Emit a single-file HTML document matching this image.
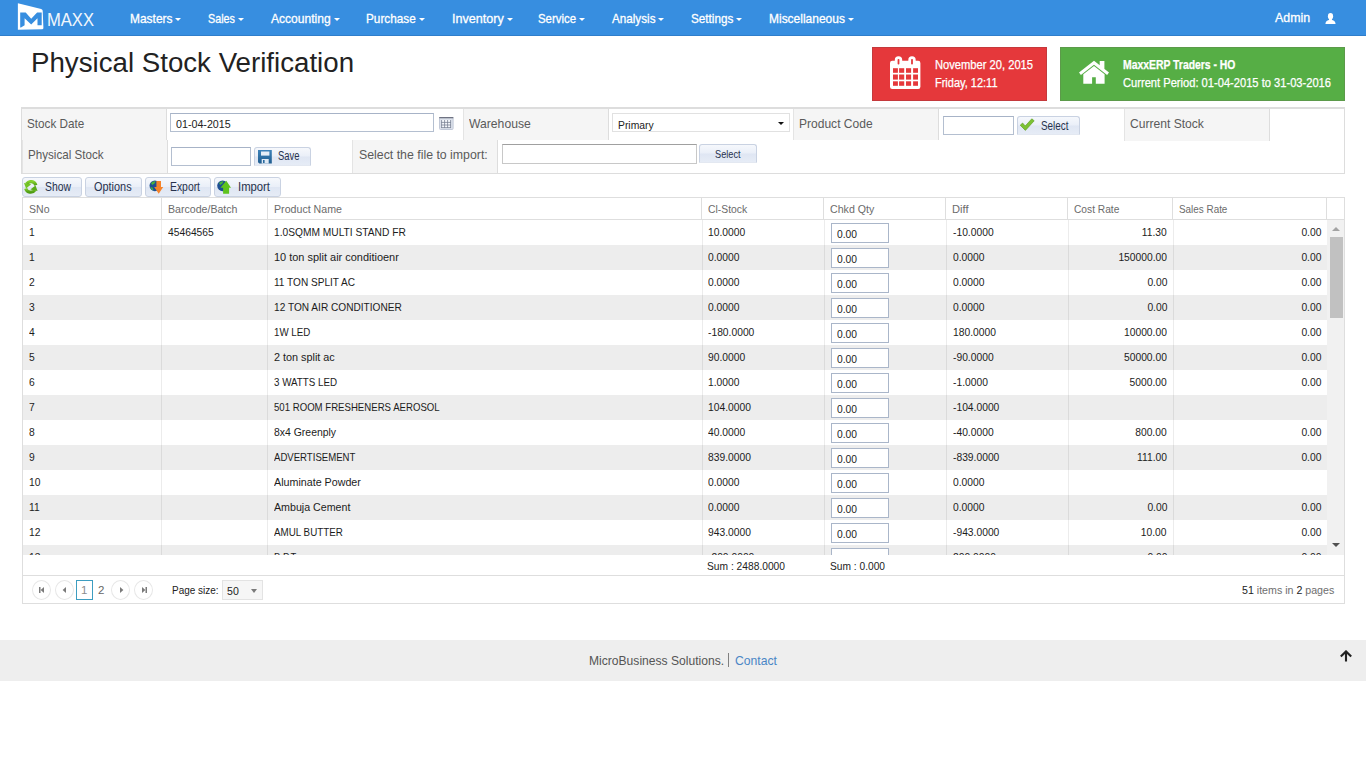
<!DOCTYPE html>
<html>
<head>
<meta charset="utf-8">
<title>Physical Stock Verification</title>
<style>
*{box-sizing:border-box;margin:0;padding:0}
html,body{width:1366px;height:768px;overflow:hidden;background:#fff}
body{font-family:"Liberation Sans",sans-serif;position:relative;color:#333}
.abs{position:absolute;white-space:nowrap}
.sx{display:inline-block;transform-origin:0 50%;white-space:pre}
.sx.r{transform-origin:100% 50%}
/* NAVBAR */
#nav{position:absolute;left:0;top:0;width:1366px;height:36px;background:#378ee0;border-bottom:1px solid #2f7ecb}
.ni{position:absolute;top:11px;font-size:13px;line-height:16px;color:#fff;white-space:nowrap;-webkit-text-stroke:.3px #fff}
.car{position:absolute;top:17.5px;width:0;height:0;border-left:3px solid transparent;border-right:3px solid transparent;border-top:3px solid #fff}
/* TITLE */
#title{position:absolute;left:31px;top:45px;font-size:27px;line-height:36px;color:#222;white-space:nowrap}
/* INFO BOXES */
#red{position:absolute;left:872px;top:47px;width:175px;height:54px;background:#e5383b;box-shadow:inset 0 0 0 1px #c4393c}
#green{position:absolute;left:1060px;top:47px;width:285px;height:54px;background:#56ae45;box-shadow:inset 0 0 0 1px #5c9a4a}
.bt{position:absolute;font-size:12px;line-height:14px;color:#fff;white-space:nowrap;-webkit-text-stroke:.25px #fff}
/* FORM */
#form{position:absolute;left:21px;top:107px;width:1324px;height:67px;border:1px solid #ddd;border-top:2px solid #ddd;background:#fff}
.lc{position:absolute;background:#f5f5f5;border-right:1px solid #ddd;border-left:1px solid #e4e4e4}
.lb{position:absolute;font-size:13px;line-height:16px;color:#5a5a5a;white-space:nowrap}
.inp{position:absolute;background:#fff;border:1px solid #b4bfd0;border-top-color:#a7b3c7}
.itx{position:absolute;font-size:11px;line-height:14px;color:#222;white-space:nowrap}
.btn{position:absolute;border:1px solid #c9d2e2;border-bottom-color:#e3e8f1;border-radius:3px 3px 1px 1px;background:linear-gradient(#f6f8fc 0%,#eaeff8 48%,#dfe6f3 52%,#e6ecf6 100%)}
.btn.tb{border-bottom-color:#c9d2e2;border-radius:3px}
.btx{position:absolute;font-size:12px;line-height:14px;color:#27324d;white-space:nowrap}
/*CSS-FORM*/
/* TOOLBAR + GRID */
.hl{position:absolute;background:#dedede;height:1px}
.vl{position:absolute;background:#dedede;width:1px}
.hd{position:absolute;top:199px;font-size:11px;line-height:21px;color:#6b6b6b;white-space:nowrap}
#gbody{position:absolute;left:23px;top:220px;width:1304px;height:335px;overflow:hidden;background:#fff}
.row{position:absolute;left:0;width:1304px;height:25px}
.row.alt{background:#ededed}
.c{position:absolute;top:0;font-size:11px;line-height:25px;color:#1c1c1c;white-space:nowrap}
.cr{text-align:right}
.qi{position:absolute;left:808px;top:3px;width:58px;height:20px;background:#fff;border:1px solid #aab6c9}
.qt{position:absolute;left:814px;top:4px;font-size:11px;line-height:20px;color:#1c1c1c}
.bv{position:absolute;top:0;width:1px;height:336px;background:rgba(0,0,0,.075)}
/*CSS-GRID*/
/* PAGER / FOOTER */
.pc{position:absolute;top:580px;width:19px;height:20px;border:1px solid #e7e7e7;border-radius:50%;background:#fff}
.pt{position:absolute;font-size:11px;line-height:14px;white-space:nowrap}
#foot{position:absolute;left:0;top:640px;width:1366px;height:41px;background:#eee}
.ft{position:absolute;top:653px;font-size:13px;line-height:16px;color:#555;white-space:nowrap}
/*CSS-FOOT*/
</style>
</head>
<body>
<!--NAV-->
<div id="nav">
<svg class="abs" style="left:16px;top:0px" width="32" height="34" viewBox="16 0 32 34"><path d="M17.9 3.2 L41.2 8.9 Q42.6 9.3 42.7 10.8 L43.4 27.9 Q43.4 29.3 42 29.35 L17.9 29.7 Z" fill="#fff"/><path d="M20.2 12.4 H25.7 L31.2 18.7 L37.1 12.4 H41.7 V25.3 H37.5 V18.3 L31.2 24.6 L24.6 18.3 V25.3 L21 27.6 H20.2 Z" fill="#378ee0"/></svg>
<div class="abs" id="maxx" style="left:47px;top:10px;font-size:18px;line-height:20px;color:#fff;opacity:.93"><span class="sx" style="transform:scaleX(0.921)">MAXX</span></div>
<div class="ni" style="left:130px"><span class="sx" style="transform:scaleX(0.919)">Masters</span></div><i class="car" style="left:175px"></i>
<div class="ni" style="left:208px"><span class="sx" style="transform:scaleX(0.830)">Sales</span></div><i class="car" style="left:238px"></i>
<div class="ni" style="left:271px"><span class="sx" style="transform:scaleX(0.928)">Accounting</span></div><i class="car" style="left:334px"></i>
<div class="ni" style="left:366px"><span class="sx" style="transform:scaleX(0.905)">Purchase</span></div><i class="car" style="left:419px"></i>
<div class="ni" style="left:452px"><span class="sx" style="transform:scaleX(0.969)">Inventory</span></div><i class="car" style="left:507px"></i>
<div class="ni" style="left:538px"><span class="sx" style="transform:scaleX(0.879)">Service</span></div><i class="car" style="left:579px"></i>
<div class="ni" style="left:612px"><span class="sx" style="transform:scaleX(0.898)">Analysis</span></div><i class="car" style="left:658px"></i>
<div class="ni" style="left:691px"><span class="sx" style="transform:scaleX(0.900)">Settings</span></div><i class="car" style="left:736px"></i>
<div class="ni" style="left:769px"><span class="sx" style="transform:scaleX(0.921)">Miscellaneous</span></div><i class="car" style="left:848px"></i>
<div class="ni" style="left:1275px;top:10px"><span class="sx" style="transform:scaleX(0.952)">Admin</span></div>
<svg class="abs" style="left:1324.5px;top:12.8px" width="11" height="11.6" viewBox="0 0 12 13"><ellipse cx="6" cy="3.6" rx="2.9" ry="3.6" fill="#fff"/><path d="M0.3 12.5 C0.3 9.5 2 8.6 4.2 7.8 L4.6 6.5 H7.4 L7.8 7.8 C10 8.6 11.7 9.5 11.7 12.5 Z" fill="#fff"/></svg>
</div>
<div id="title"><span class="sx" style="transform:scaleX(1.025)">Physical Stock Verification</span></div>
<!--BOXES-->
<div id="red">
<svg class="abs" style="left:18px;top:9px" width="31" height="34" viewBox="0 0 31 34"><rect x="0" y="4.8" width="30.4" height="28.2" rx="2.2" fill="#fff"/><rect x="4.8" y="0.2" width="7.4" height="10" rx="3.7" fill="#fff"/><rect x="18.3" y="0.2" width="7.4" height="10" rx="3.7" fill="#fff"/><g fill="#e5383b"><rect x="7.6" y="3" width="1.8" height="5.6" rx=".8"/><rect x="21.1" y="3" width="1.8" height="5.6" rx=".8"/><rect x="3" y="12.2" width="4.9" height="4.6"/><rect x="9.1" y="12.2" width="5.1" height="4.6"/><rect x="16" y="12.2" width="5.1" height="4.6"/><rect x="23.1" y="12.2" width="4.9" height="4.6"/><rect x="3" y="18.5" width="4.9" height="5.1"/><rect x="9.1" y="18.5" width="5.1" height="5.1"/><rect x="16" y="18.5" width="5.1" height="5.1"/><rect x="23.1" y="18.5" width="4.9" height="5.1"/><rect x="3" y="25.3" width="4.9" height="4.5"/><rect x="9.1" y="25.3" width="5.1" height="4.5"/><rect x="16" y="25.3" width="5.1" height="4.5"/><rect x="23.1" y="25.3" width="4.9" height="4.5"/></g></svg>
<div class="bt" style="left:63px;top:11px"><span class="sx" style="transform:scaleX(0.930)">November 20, 2015</span></div>
<div class="bt" style="left:63px;top:29px"><span class="sx" style="transform:scaleX(0.916)">Friday, 12:11</span></div>
</div>
<div id="green">
<svg class="abs" style="left:18px;top:13px" width="32" height="25" viewBox="0 0 32 25"><path d="M1 12.5 L16 .8 L31 12.5 L29.1 14.9 L16 4.7 L2.9 14.9 Z M21.7 1.1 H26.4 V10 L21.7 6.2 Z M5.3 14.3 L16 5.9 L26.6 14.3 V23.8 H17.8 V17.3 H14.1 V23.8 H5.3 Z" fill="#fff"/></svg>
<div class="bt" style="left:63px;top:11px;font-weight:bold"><span class="sx" style="transform:scaleX(0.866)">MaxxERP Traders - HO</span></div>
<div class="bt" style="left:63px;top:29px"><span class="sx" style="transform:scaleX(0.928)">Current Period: 01-04-2015 to 31-03-2016</span></div>
</div>
<!--FORM-->
<div id="form"></div>
<div class="lc" style="left:22px;top:109px;width:145px;height:31px;border-left:0"></div>
<div class="lc" style="left:22px;top:140px;width:146px;height:33px"></div>
<div class="lc" style="left:463px;top:109px;width:146px;height:31px"></div>
<div class="lc" style="left:352px;top:140px;width:146px;height:33px"></div>
<div class="lc" style="left:793px;top:109px;width:146px;height:31px"></div>
<div class="lc" style="left:1124px;top:109px;width:146px;height:32px"></div>
<div class="lb" style="left:27px;top:116px"><span class="sx" style="transform:scaleX(0.901)">Stock Date</span></div>
<div class="lb" style="left:28px;top:147px"><span class="sx" style="transform:scaleX(0.894)">Physical Stock</span></div>
<div class="lb" style="left:469px;top:116px"><span class="sx" style="transform:scaleX(0.936)">Warehouse</span></div>
<div class="lb" style="left:359px;top:147px"><span class="sx" style="transform:scaleX(0.948)">Select the file to import:</span></div>
<div class="lb" style="left:799px;top:116px"><span class="sx" style="transform:scaleX(0.926)">Product Code</span></div>
<div class="lb" style="left:1130px;top:116px"><span class="sx" style="transform:scaleX(0.930)">Current Stock</span></div>
<div class="inp" style="left:170px;top:113px;width:264px;height:19px"></div>
<div class="itx" style="left:176px;top:117px"><span class="sx" style="transform:scaleX(0.972)">01-04-2015</span></div>
<svg class="abs" style="left:439px;top:117px" width="15" height="13" viewBox="0 0 15 13"><rect x=".5" y=".5" width="13.6" height="12" rx="1" fill="#dde2ec" stroke="#c2c9d8"/><rect x=".2" y="0" width="14.2" height="1.3" fill="#6f7383"/><rect x="2.4" y="3" width="9.4" height="7.8" fill="#f6f8fc"/><g stroke="#7a8194" stroke-width=".8"><path d="M2.6 3 V11 M5.6 3 V11 M8.6 3 V11 M11.6 3 V11 M2.2 5.4 H12 M2.2 8 H12 M2.2 10.6 H12"/></g></svg>
<div class="inp" style="left:612px;top:113px;width:178px;height:19px;border-color:#e1e1e1"></div>
<div class="itx" style="left:618px;top:118px"><span class="sx" style="transform:scaleX(0.940)">Primary</span></div>
<i class="abs" style="left:778px;top:121.5px;width:0;height:0;border-left:3px solid transparent;border-right:3px solid transparent;border-top:3.4px solid #111"></i>
<div class="inp" style="left:943px;top:116px;width:71px;height:19px"></div>
<div class="btn" style="left:1017px;top:116px;width:63px;height:19px"></div>
<svg class="abs" style="left:1019px;top:118px" width="16" height="13" viewBox="0 0 16 13"><path d="M1.2 7.2 L3.6 5 L6.2 8 L12.8 0.8 L15.2 2.8 L6.4 12.4 Z" fill="#7cc233" stroke="#5a9a1e" stroke-width=".6"/></svg>
<div class="btx" style="left:1041px;top:119px"><span class="sx" style="transform:scaleX(0.821)">Select</span></div>
<div class="inp" style="left:171px;top:147px;width:80px;height:19px"></div>
<div class="btn" style="left:254px;top:147px;width:57px;height:19px"></div>
<svg class="abs" style="left:258px;top:150px" width="14" height="14" viewBox="0 0 14 14"><defs><linearGradient id="fg" x1="0" y1="0" x2="0" y2="1"><stop offset="0" stop-color="#3d83ba"/><stop offset="1" stop-color="#1f5c8e"/></linearGradient></defs><path d="M0 0 H13.8 V13.6 H1.4 L0 12.2 Z" fill="url(#fg)"/><rect x="3" y="1.5" width="8.4" height="4.1" fill="#e6eef7"/><rect x="3.7" y="9" width="7" height="4.6" fill="#dfe9f4"/><rect x="5" y="10" width="1.6" height="3" fill="#2a6a9f"/></svg>
<div class="btx" style="left:278px;top:149px"><span class="sx" style="transform:scaleX(0.786)">Save</span></div>
<div class="inp" style="left:502px;top:144px;width:195px;height:20px;border-color:#c8c8c8;border-top-color:#a0a0a0"></div>
<div class="btn" style="left:699px;top:144px;width:58px;height:19px"></div>
<div class="btx" style="left:715px;top:147px;font-size:11px"><span class="sx" style="transform:scaleX(0.837)">Select</span></div>
<!--TOOLBAR-->
<div class="btn tb" style="left:22px;top:177px;width:60px;height:20px"></div>
<div class="btn tb" style="left:85px;top:177px;width:57px;height:20px"></div>
<div class="btn tb" style="left:145px;top:177px;width:66px;height:20px"></div>
<div class="btn tb" style="left:214px;top:177px;width:67px;height:20px"></div>
<div class="btx" style="left:45px;top:180px"><span class="sx" style="transform:scaleX(0.866)">Show</span></div>
<div class="btx" style="left:94px;top:180px"><span class="sx" style="transform:scaleX(0.909)">Options</span></div>
<div class="btx" style="left:170px;top:180px"><span class="sx" style="transform:scaleX(0.865)">Export</span></div>
<div class="btx" style="left:238px;top:180px"><span class="sx" style="transform:scaleX(0.941)">Import</span></div>
<!--TBICONS-->
<svg class="abs" style="left:24px;top:180px" width="14" height="14" viewBox="0 0 14 14"><defs><linearGradient id="gg" x1="0" y1="0" x2="0" y2="1"><stop offset="0" stop-color="#84d030"/><stop offset="1" stop-color="#4f9c14"/></linearGradient></defs><g fill="none" stroke="url(#gg)" stroke-width="3.2"><path d="M11.9 5.3 A5.2 5.2 0 0 0 2.6 3.9"/><path d="M1.7 8.5 A5.2 5.2 0 0 0 11 9.9"/></g><path d="M0 2.9 L7.2 4.2 L2.1 8.4 Z" fill="#74c427"/><path d="M13.6 10.9 L6.4 9.6 L11.5 5.4 Z" fill="#5aaa19"/></svg>
<svg class="abs" style="left:149px;top:180px" width="15" height="14" viewBox="0 0 15 14"><circle cx="5.9" cy="5.8" r="5.4" fill="#1e4f93"/><path d="M2 3 Q4 .8 6.5 1.2 L5.5 3.5 L3.2 5 Z M1.2 7 L3.5 7.5 L4.5 10.5 L2.8 9.8 Z" fill="#46b23c"/><path d="M7.4 1 H12 V7 H14.2 L9.7 13.8 L5.2 7 H7.4 Z" fill="#f5832b"/></svg>
<svg class="abs" style="left:217px;top:180px" width="15" height="14" viewBox="0 0 15 14"><circle cx="5.6" cy="5.8" r="5.4" fill="#1e4f93"/><path d="M2 3 Q4 .8 6.5 1.2 L5.5 3.5 L3.2 5 Z" fill="#46b23c"/><path d="M9.3 .7 L14 7.7 H12.1 V13.7 H6.1 V7.7 H3.4 Z" fill="#5ec31d"/></svg>
<!--GRID-->
<div class="hl" style="left:22px;top:197px;width:1323px"></div>
<div class="hl" style="left:22px;top:219px;width:1323px"></div>
<div class="vl" style="left:22px;top:197px;height:407px"></div>
<div class="vl" style="left:1344px;top:197px;height:407px"></div>
<div class="vl" style="left:161px;top:198px;height:21px"></div>
<div class="vl" style="left:267px;top:198px;height:21px"></div>
<div class="vl" style="left:701px;top:198px;height:21px"></div>
<div class="vl" style="left:823px;top:198px;height:21px"></div>
<div class="vl" style="left:945px;top:198px;height:21px"></div>
<div class="vl" style="left:1067px;top:198px;height:21px"></div>
<div class="vl" style="left:1172px;top:198px;height:21px"></div>
<div class="vl" style="left:1326px;top:198px;height:21px"></div>
<div class="hd" style="left:29px"><span class="sx" style="transform:scaleX(0.958)">SNo</span></div>
<div class="hd" style="left:168px"><span class="sx" style="transform:scaleX(0.963)">Barcode/Batch</span></div>
<div class="hd" style="left:274px"><span class="sx" style="transform:scaleX(0.967)">Product Name</span></div>
<div class="hd" style="left:708px"><span class="sx" style="transform:scaleX(0.943)">Cl-Stock</span></div>
<div class="hd" style="left:830px"><span class="sx" style="transform:scaleX(0.966)">Chkd Qty</span></div>
<div class="hd" style="left:952px"><span class="sx" style="transform:scaleX(1.011)">Diff</span></div>
<div class="hd" style="left:1074px"><span class="sx" style="transform:scaleX(0.928)">Cost Rate</span></div>
<div class="hd" style="left:1179px"><span class="sx" style="transform:scaleX(0.899)">Sales Rate</span></div>
<div id="gbody">
<div class="row" style="top:0px"><div class="c" style="left:6px"><span class="sx" style="transform:scaleX(.935)">1</span></div><div class="c" style="left:145px"><span class="sx" style="transform:scaleX(.935)">45464565</span></div><div class="c" style="left:251px"><span class="sx" style="transform:scaleX(0.928)">1.0SQMM MULTI STAND FR</span></div><div class="c" style="left:685px"><span class="sx" style="transform:scaleX(.935)">10.0000</span></div><div class="qi"></div><div class="qt"><span class="sx" style="transform:scaleX(.935)">0.00</span></div><div class="c" style="left:930px"><span class="sx" style="transform:scaleX(.935)">-10.0000</span></div><div class="c cr" style="right:160px"><span class="sx r" style="transform:scaleX(.935)">11.30</span></div><div class="c cr" style="right:6px"><span class="sx r" style="transform:scaleX(.935)">0.00</span></div></div>
<div class="row alt" style="top:25px"><div class="c" style="left:6px"><span class="sx" style="transform:scaleX(.935)">1</span></div><div class="c" style="left:251px"><span class="sx" style="transform:scaleX(0.996)">10 ton split air conditioenr</span></div><div class="c" style="left:685px"><span class="sx" style="transform:scaleX(.935)">0.0000</span></div><div class="qi"></div><div class="qt"><span class="sx" style="transform:scaleX(.935)">0.00</span></div><div class="c" style="left:930px"><span class="sx" style="transform:scaleX(.935)">0.0000</span></div><div class="c cr" style="right:160px"><span class="sx r" style="transform:scaleX(.935)">150000.00</span></div><div class="c cr" style="right:6px"><span class="sx r" style="transform:scaleX(.935)">0.00</span></div></div>
<div class="row" style="top:50px"><div class="c" style="left:6px"><span class="sx" style="transform:scaleX(.935)">2</span></div><div class="c" style="left:251px"><span class="sx" style="transform:scaleX(0.916)">11 TON SPLIT AC</span></div><div class="c" style="left:685px"><span class="sx" style="transform:scaleX(.935)">0.0000</span></div><div class="qi"></div><div class="qt"><span class="sx" style="transform:scaleX(.935)">0.00</span></div><div class="c" style="left:930px"><span class="sx" style="transform:scaleX(.935)">0.0000</span></div><div class="c cr" style="right:160px"><span class="sx r" style="transform:scaleX(.935)">0.00</span></div><div class="c cr" style="right:6px"><span class="sx r" style="transform:scaleX(.935)">0.00</span></div></div>
<div class="row alt" style="top:75px"><div class="c" style="left:6px"><span class="sx" style="transform:scaleX(.935)">3</span></div><div class="c" style="left:251px"><span class="sx" style="transform:scaleX(0.920)">12 TON AIR CONDITIONER</span></div><div class="c" style="left:685px"><span class="sx" style="transform:scaleX(.935)">0.0000</span></div><div class="qi"></div><div class="qt"><span class="sx" style="transform:scaleX(.935)">0.00</span></div><div class="c" style="left:930px"><span class="sx" style="transform:scaleX(.935)">0.0000</span></div><div class="c cr" style="right:160px"><span class="sx r" style="transform:scaleX(.935)">0.00</span></div><div class="c cr" style="right:6px"><span class="sx r" style="transform:scaleX(.935)">0.00</span></div></div>
<div class="row" style="top:100px"><div class="c" style="left:6px"><span class="sx" style="transform:scaleX(.935)">4</span></div><div class="c" style="left:251px"><span class="sx" style="transform:scaleX(0.886)">1W LED</span></div><div class="c" style="left:685px"><span class="sx" style="transform:scaleX(.935)">-180.0000</span></div><div class="qi"></div><div class="qt"><span class="sx" style="transform:scaleX(.935)">0.00</span></div><div class="c" style="left:930px"><span class="sx" style="transform:scaleX(.935)">180.0000</span></div><div class="c cr" style="right:160px"><span class="sx r" style="transform:scaleX(.935)">10000.00</span></div><div class="c cr" style="right:6px"><span class="sx r" style="transform:scaleX(.935)">0.00</span></div></div>
<div class="row alt" style="top:125px"><div class="c" style="left:6px"><span class="sx" style="transform:scaleX(.935)">5</span></div><div class="c" style="left:251px"><span class="sx" style="transform:scaleX(0.984)">2 ton split ac</span></div><div class="c" style="left:685px"><span class="sx" style="transform:scaleX(.935)">90.0000</span></div><div class="qi"></div><div class="qt"><span class="sx" style="transform:scaleX(.935)">0.00</span></div><div class="c" style="left:930px"><span class="sx" style="transform:scaleX(.935)">-90.0000</span></div><div class="c cr" style="right:160px"><span class="sx r" style="transform:scaleX(.935)">50000.00</span></div><div class="c cr" style="right:6px"><span class="sx r" style="transform:scaleX(.935)">0.00</span></div></div>
<div class="row" style="top:150px"><div class="c" style="left:6px"><span class="sx" style="transform:scaleX(.935)">6</span></div><div class="c" style="left:251px"><span class="sx" style="transform:scaleX(0.891)">3 WATTS LED</span></div><div class="c" style="left:685px"><span class="sx" style="transform:scaleX(.935)">1.0000</span></div><div class="qi"></div><div class="qt"><span class="sx" style="transform:scaleX(.935)">0.00</span></div><div class="c" style="left:930px"><span class="sx" style="transform:scaleX(.935)">-1.0000</span></div><div class="c cr" style="right:160px"><span class="sx r" style="transform:scaleX(.935)">5000.00</span></div><div class="c cr" style="right:6px"><span class="sx r" style="transform:scaleX(.935)">0.00</span></div></div>
<div class="row alt" style="top:175px"><div class="c" style="left:6px"><span class="sx" style="transform:scaleX(.935)">7</span></div><div class="c" style="left:251px"><span class="sx" style="transform:scaleX(0.874)">501 ROOM FRESHENERS AEROSOL</span></div><div class="c" style="left:685px"><span class="sx" style="transform:scaleX(.935)">104.0000</span></div><div class="qi"></div><div class="qt"><span class="sx" style="transform:scaleX(.935)">0.00</span></div><div class="c" style="left:930px"><span class="sx" style="transform:scaleX(.935)">-104.0000</span></div></div>
<div class="row" style="top:200px"><div class="c" style="left:6px"><span class="sx" style="transform:scaleX(.935)">8</span></div><div class="c" style="left:251px"><span class="sx" style="transform:scaleX(0.949)">8x4 Greenply</span></div><div class="c" style="left:685px"><span class="sx" style="transform:scaleX(.935)">40.0000</span></div><div class="qi"></div><div class="qt"><span class="sx" style="transform:scaleX(.935)">0.00</span></div><div class="c" style="left:930px"><span class="sx" style="transform:scaleX(.935)">-40.0000</span></div><div class="c cr" style="right:160px"><span class="sx r" style="transform:scaleX(.935)">800.00</span></div><div class="c cr" style="right:6px"><span class="sx r" style="transform:scaleX(.935)">0.00</span></div></div>
<div class="row alt" style="top:225px"><div class="c" style="left:6px"><span class="sx" style="transform:scaleX(.935)">9</span></div><div class="c" style="left:251px"><span class="sx" style="transform:scaleX(0.872)">ADVERTISEMENT</span></div><div class="c" style="left:685px"><span class="sx" style="transform:scaleX(.935)">839.0000</span></div><div class="qi"></div><div class="qt"><span class="sx" style="transform:scaleX(.935)">0.00</span></div><div class="c" style="left:930px"><span class="sx" style="transform:scaleX(.935)">-839.0000</span></div><div class="c cr" style="right:160px"><span class="sx r" style="transform:scaleX(.935)">111.00</span></div><div class="c cr" style="right:6px"><span class="sx r" style="transform:scaleX(.935)">0.00</span></div></div>
<div class="row" style="top:250px"><div class="c" style="left:6px"><span class="sx" style="transform:scaleX(.935)">10</span></div><div class="c" style="left:251px"><span class="sx" style="transform:scaleX(0.973)">Aluminate Powder</span></div><div class="c" style="left:685px"><span class="sx" style="transform:scaleX(.935)">0.0000</span></div><div class="qi"></div><div class="qt"><span class="sx" style="transform:scaleX(.935)">0.00</span></div><div class="c" style="left:930px"><span class="sx" style="transform:scaleX(.935)">0.0000</span></div></div>
<div class="row alt" style="top:275px"><div class="c" style="left:6px"><span class="sx" style="transform:scaleX(.935)">11</span></div><div class="c" style="left:251px"><span class="sx" style="transform:scaleX(0.969)">Ambuja Cement</span></div><div class="c" style="left:685px"><span class="sx" style="transform:scaleX(.935)">0.0000</span></div><div class="qi"></div><div class="qt"><span class="sx" style="transform:scaleX(.935)">0.00</span></div><div class="c" style="left:930px"><span class="sx" style="transform:scaleX(.935)">0.0000</span></div><div class="c cr" style="right:160px"><span class="sx r" style="transform:scaleX(.935)">0.00</span></div><div class="c cr" style="right:6px"><span class="sx r" style="transform:scaleX(.935)">0.00</span></div></div>
<div class="row" style="top:300px"><div class="c" style="left:6px"><span class="sx" style="transform:scaleX(.935)">12</span></div><div class="c" style="left:251px"><span class="sx" style="transform:scaleX(0.892)">AMUL BUTTER</span></div><div class="c" style="left:685px"><span class="sx" style="transform:scaleX(.935)">943.0000</span></div><div class="qi"></div><div class="qt"><span class="sx" style="transform:scaleX(.935)">0.00</span></div><div class="c" style="left:930px"><span class="sx" style="transform:scaleX(.935)">-943.0000</span></div><div class="c cr" style="right:160px"><span class="sx r" style="transform:scaleX(.935)">10.00</span></div><div class="c cr" style="right:6px"><span class="sx r" style="transform:scaleX(.935)">0.00</span></div></div>
<div class="row alt" style="top:325px"><div class="c" style="left:6px"><span class="sx" style="transform:scaleX(.935)">13</span></div><div class="c" style="left:251px"><span class="sx" style="transform:scaleX(0.858)">B.P.T</span></div><div class="c" style="left:685px"><span class="sx" style="transform:scaleX(.935)">-200.0000</span></div><div class="qi"></div><div class="qt"><span class="sx" style="transform:scaleX(.935)">0.00</span></div><div class="c" style="left:930px"><span class="sx" style="transform:scaleX(.935)">200.0000</span></div><div class="c cr" style="right:160px"><span class="sx r" style="transform:scaleX(.935)">0.00</span></div><div class="c cr" style="right:6px"><span class="sx r" style="transform:scaleX(.935)">0.00</span></div></div>
<div class="bv" style="left:138px"></div>
<div class="bv" style="left:244px"></div>
<div class="bv" style="left:679px"></div>
<div class="bv" style="left:801px"></div>
<div class="bv" style="left:923px"></div>
<div class="bv" style="left:1045px"></div>
<div class="bv" style="left:1150px"></div>
</div>
<!--SCROLL-->
<div class="abs" style="left:1327px;top:220px;width:17px;height:335px;background:#f1f1f1"></div>
<div class="abs" style="left:1330px;top:237px;width:13px;height:81px;background:#c1c1c1"></div>
<i class="abs" style="left:1332px;top:227px;width:0;height:0;border-left:4px solid transparent;border-right:4px solid transparent;border-bottom:4px solid #a3a3a3"></i>
<i class="abs" style="left:1332px;top:543px;width:0;height:0;border-left:4px solid transparent;border-right:4px solid transparent;border-top:4px solid #505050"></i>
<!--SUMPAGER-->
<div class="abs" style="left:23px;top:555px;width:1321px;height:20px;background:#fff"></div>
<div class="hl" style="left:22px;top:575px;width:1323px"></div>
<div class="hl" style="left:22px;top:603px;width:1323px"></div>
<div class="pt" style="left:707px;top:559px;color:#222"><span class="sx" style="transform:scaleX(0.931)">Sum : 2488.0000</span></div>
<div class="pt" style="left:830px;top:559px;color:#222"><span class="sx" style="transform:scaleX(0.927)">Sum : 0.000</span></div>
<div class="pc" style="left:32px"></div><div class="pc" style="left:55px"></div><div class="pc" style="left:111px"></div><div class="pc" style="left:134px"></div>
<svg class="abs" style="left:32px;top:580px" width="122" height="20" viewBox="0 0 122 20"><g fill="#7a7a7a"><rect x="7" y="7" width="1.5" height="6"/><path d="M12 7 V13 L8.6 10 Z"/><path d="M34 7 V13 L30.6 10 Z"/><path d="M88 7 V13 L91.4 10 Z"/><path d="M110 7 V13 L113.4 10 Z"/><rect x="113.5" y="7" width="1.5" height="6"/></g></svg>
<div class="abs" style="left:76px;top:580px;width:17px;height:20px;border:1px solid #3d9dc0;background:#fff"></div>
<div class="pt" style="left:81px;top:583px;color:#8c8c8c;font-size:11.5px">1</div>
<div class="pt" style="left:98px;top:583px;color:#666;font-size:11.5px">2</div>
<div class="pt" style="left:172px;top:583px;color:#222"><span class="sx" style="transform:scaleX(0.905)">Page size:</span></div>
<div class="abs" style="left:222px;top:580px;width:41px;height:20px;border:1px solid #e3e3e3;background:#f6f6f6"></div>
<div class="pt" style="left:227px;top:584px;color:#222"><span class="sx" style="transform:scaleX(0.963)">50</span></div>
<i class="abs" style="left:251px;top:589px;width:0;height:0;border-left:3.2px solid transparent;border-right:3.2px solid transparent;border-top:4px solid #7a7a7a"></i>
<div class="pt" style="left:1242px;top:583px;color:#6e6e6e"><span class="sx" style="transform:scaleX(.967)"><span style="color:#222">51</span> items in <span style="color:#222">2</span> pages</span></div>
<!--FOOTER-->
<div id="foot"></div>
<div class="ft" style="left:589px"><span class="sx" style="transform:scaleX(0.930)">MicroBusiness Solutions.</span></div>
<div class="abs" style="left:728px;top:653px;width:1px;height:14px;background:#808080"></div>
<div class="ft" style="left:735px;color:#4a86c6"><span class="sx" style="transform:scaleX(0.937)">Contact</span></div>
<svg class="abs" style="left:1339px;top:650px" width="14" height="13" viewBox="0 0 14 13"><path d="M1.8 6.6 L7 1.4 L12.2 6.6 M7 2 V11.6" fill="none" stroke="#222" stroke-width="2.1" stroke-linecap="butt"/></svg>
</body>
</html>
